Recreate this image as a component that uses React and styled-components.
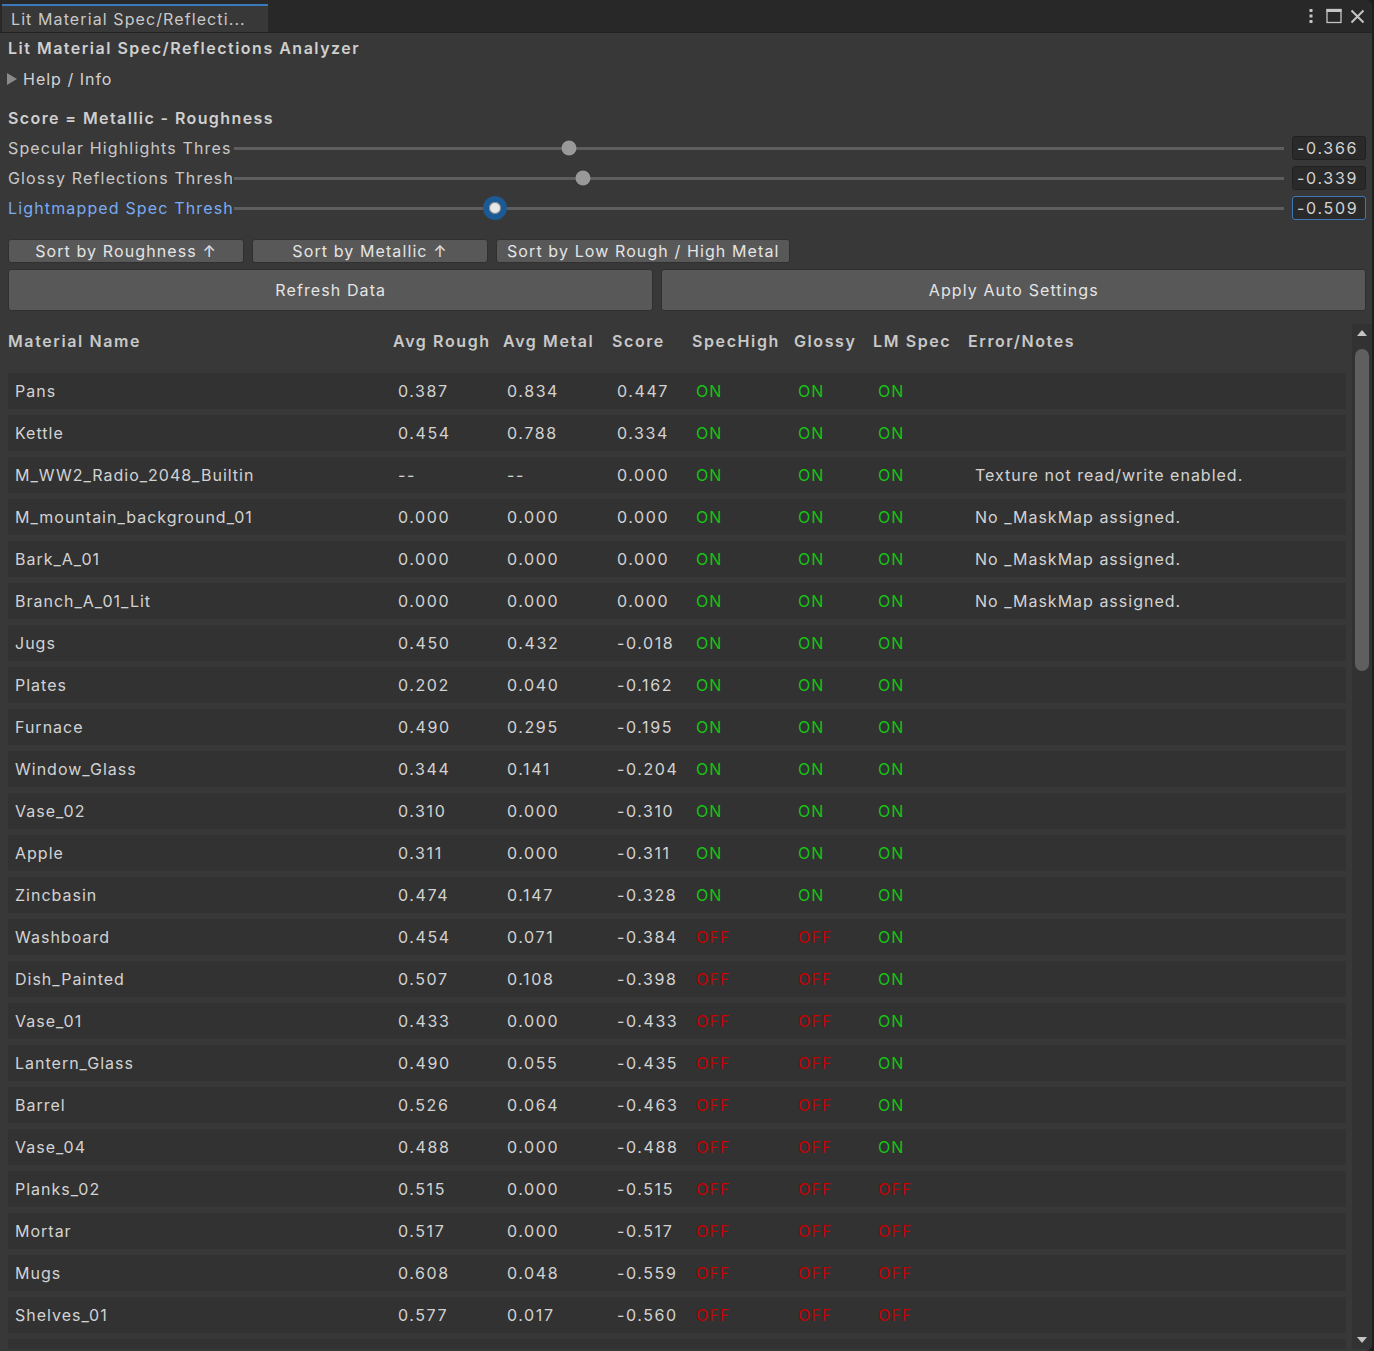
import React from "react";
import styled, { createGlobalStyle, css } from "styled-components";

const Global = createGlobalStyle`
  html, body {
    margin: 0;
    padding: 0;
    background: #1c1c1c;
  }
  * { box-sizing: border-box; }
`;

const Window = styled.div`
  width: 1374px;
  height: 1351px;
  display: flex;
  flex-direction: column;
  background: #383838;
  border-right: 2px solid #1e1e1e;
  border-radius: 0 8px 8px 0;
  overflow: hidden;
  font-family: Inter, "Noto Sans", sans-serif;
  font-size: 16px;
  letter-spacing: 1px;
  color: #d2d2d2;
`;

const TabBar = styled.div`
  height: 33px;
  flex-shrink: 0;
  display: flex;
  align-items: flex-end;
  background: #282828;
  border-bottom: 1px solid #232323;
  padding-left: 2px;
`;

const Tab = styled.div`
  width: 266px;
  height: 28px;
  background: #383838;
  border-top: 2px solid #3a79bb;
  padding-left: 9px;
  line-height: 26px;
  color: #c8c8c8;
  letter-spacing: 1.1px;
  white-space: nowrap;
  overflow: hidden;
`;

const TabTools = styled.div`
  margin-left: auto;
  height: 32px;
  display: flex;
  align-items: center;
  padding-right: 7px;
  color: #c4c4c4;
`;

const ToolIcon = styled.span`
  display: flex;
  margin-left: ${(p) => p.gap || 0}px;
`;

const Body = styled.div`
  flex: 1;
  min-height: 0;
  display: flex;
  flex-direction: column;
  padding: 0 6px 2px 8px;
`;

const Title = styled.div`
  flex-shrink: 0;
  height: 31px;
  line-height: 31px;
  font-weight: 600;
  letter-spacing: 1.5px;
  color: #cfcfcf;
`;

const Foldout = styled.div`
  flex-shrink: 0;
  height: 30px;
  display: flex;
  align-items: center;
  margin-left: -1px;
  gap: 6px;
  color: #d2d2d2;
`;

const Arrow = styled.span`
  width: 0;
  height: 0;
  border-top: 6px solid transparent;
  border-bottom: 6px solid transparent;
  border-left: 10px solid #8a8a8a;
`;

const SectionHead = styled.div`
  flex-shrink: 0;
  margin-top: 9px;
  height: 30px;
  line-height: 30px;
  font-weight: 600;
  letter-spacing: 1.4px;
  color: #cfcfcf;
`;

const SliderRow = styled.div`
  flex-shrink: 0;
  height: 30px;
  display: flex;
  align-items: center;
`;

const SliderLabel = styled.div`
  width: 224px;
  flex-shrink: 0;
  white-space: nowrap;
  overflow: hidden;
  letter-spacing: 1.15px;
  color: ${(p) => (p.focused ? "#7aaaf0" : "#c8c8c8")};
`;

const Track = styled.div`
  position: relative;
  flex: 1;
  margin-left: 2px;
  height: 3px;
  background: #5e5e5e;
`;

const Thumb = styled.div`
  position: absolute;
  top: 50%;
  width: 15px;
  height: 15px;
  border-radius: 50%;
  background: #999999;
  transform: translate(-50%, -50%);
  ${(p) =>
    p.focused &&
    css`
      width: 24px;
      height: 24px;
      background: #e8e8e8;
      border: 6px solid #1d5a94;
      box-shadow: inset 0 0 0 1px #8a8a8a;
    `}
`;

const ValueField = styled.div`
  width: 74px;
  height: 24px;
  flex-shrink: 0;
  margin-left: 8px;
  padding-left: 4px;
  line-height: 22px;
  letter-spacing: 1.7px;
  background: #2a2a2a;
  border: 1px solid ${(p) => (p.focused ? "#3c78b5" : "#212121")};
  border-radius: 3px;
  color: #d2d2d2;
`;

const SortBar = styled.div`
  flex-shrink: 0;
  margin-top: 16px;
  display: flex;
  gap: 8px;
`;

const Button = styled.button`
  font-family: inherit;
  font-size: 16px;
  letter-spacing: 1.1px;
  color: #e4e4e4;
  background: #585858;
  border: 1px solid #303030;
  border-radius: 3px;
  padding: 0 10px;
  height: ${(p) => (p.big ? "42px" : "24px")};
  width: ${(p) => (p.w ? `${p.w}px` : "auto")};
  flex: ${(p) => (p.big ? "1 1 auto" : "none")};
  white-space: nowrap;
  cursor: pointer;
`;

const ActionBar = styled.div`
  flex-shrink: 0;
  margin-top: 6px;
  display: flex;
  gap: 8px;
`;

const TableArea = styled.div`
  margin-top: 13px;
  margin-right: -6px;
  flex: 1;
  min-height: 0;
  display: flex;
  gap: 6px;
`;

const TableScroll = styled.div`
  flex: 1;
  overflow: hidden;
  display: flex;
  flex-direction: column;
`;

const HeaderRow = styled.div`
  flex-shrink: 0;
  height: 34px;
  display: grid;
  grid-template-columns: 385px 110px 109px 80px 102px 79px 95px 1fr;
  align-items: center;
  font-weight: 600;
  letter-spacing: 1.6px;
  color: #c8c8c8;
  white-space: nowrap;
`;

const Rows = styled.div`
  flex-shrink: 0;
  padding-top: 15px;
  display: flex;
  flex-direction: column;
  gap: 6px;
`;

const Row = styled.div`
  flex-shrink: 0;
  height: 36px;
  display: grid;
  grid-template-columns: 383px 109px 110px 79px 102px 80px 97px 1fr;
  align-items: center;
  padding-left: 7px;
  background: #323232;
  white-space: nowrap;
`;

const Num = styled.span`
  letter-spacing: 1.6px;
`;

const Flag = styled.span`
  color: ${(p) => (p.on ? "#14c414" : "#c40000")};
`;

const ScrollBar = styled.div`
  width: 20px;
  flex-shrink: 0;
  display: flex;
  flex-direction: column;
  align-items: center;
  background: #323232;
  padding: 6px 0 6px;
`;

const ScrollArrow = styled.span`
  width: 0;
  height: 0;
  border-left: 5px solid transparent;
  border-right: 5px solid transparent;
  ${(p) =>
    p.down
      ? css`border-top: 6px solid #c4c4c4; margin-top: auto;`
      : css`border-bottom: 6px solid #c4c4c4;`}
`;

const ScrollThumb = styled.div`
  margin-top: 13px;
  width: 14px;
  height: 322px;
  border-radius: 7px;
  background: #5f5f5f;
`;

const thresholds = [
  { label: "Specular Highlights Threshold", value: -0.366 },
  { label: "Glossy Reflections Threshold", value: -0.339 },
  { label: "Lightmapped Spec Threshold", value: -0.509, focused: true },
];

const materials = [
  ["Pans", "0.387", "0.834", 0.447],
  ["Kettle", "0.454", "0.788", 0.334],
  ["M_WW2_Radio_2048_Builtin", "--", "--", 0.0, "Texture not read/write enabled."],
  ["M_mountain_background_01", "0.000", "0.000", 0.0, "No _MaskMap assigned."],
  ["Bark_A_01", "0.000", "0.000", 0.0, "No _MaskMap assigned."],
  ["Branch_A_01_Lit", "0.000", "0.000", 0.0, "No _MaskMap assigned."],
  ["Jugs", "0.450", "0.432", -0.018],
  ["Plates", "0.202", "0.040", -0.162],
  ["Furnace", "0.490", "0.295", -0.195],
  ["Window_Glass", "0.344", "0.141", -0.204],
  ["Vase_02", "0.310", "0.000", -0.31],
  ["Apple", "0.311", "0.000", -0.311],
  ["Zincbasin", "0.474", "0.147", -0.328],
  ["Washboard", "0.454", "0.071", -0.384],
  ["Dish_Painted", "0.507", "0.108", -0.398],
  ["Vase_01", "0.433", "0.000", -0.433],
  ["Lantern_Glass", "0.490", "0.055", -0.435],
  ["Barrel", "0.526", "0.064", -0.463],
  ["Vase_04", "0.488", "0.000", -0.488],
  ["Planks_02", "0.515", "0.000", -0.515],
  ["Mortar", "0.517", "0.000", -0.517],
  ["Mugs", "0.608", "0.048", -0.559],
  ["Shelves_01", "0.577", "0.017", -0.56],
];

const KebabIcon = () => (
  <svg width="6" height="16" viewBox="0 0 6 16">
    <rect x="1.5" y="1" width="3" height="3" fill="currentColor" />
    <rect x="1.5" y="6.5" width="3" height="3" fill="currentColor" />
    <rect x="1.5" y="12" width="3" height="3" fill="currentColor" />
  </svg>
);

const MaximizeIcon = () => (
  <svg width="16" height="16" viewBox="0 0 16 16">
    <rect x="1" y="1.5" width="14" height="13" fill="none" stroke="currentColor" strokeWidth="1.3" />
    <rect x="0.5" y="1" width="15" height="3" fill="currentColor" />
  </svg>
);

const CloseIcon = () => (
  <svg width="15" height="15" viewBox="0 0 15 15">
    <path d="M1.5 1.5 L13.5 13.5 M13.5 1.5 L1.5 13.5" stroke="currentColor" strokeWidth="2" />
  </svg>
);

const thumbLeft = (v) => `calc(7px + ${((v + 1) / 2).toFixed(4)} * (100% - 14px))`;

export default function App() {
  const [spec, gloss, lm] = thresholds.map((t) => t.value);
  return (
    <>
      <Global />
      <Window>
        <TabBar>
          <Tab>Lit Material Spec/Reflecti...</Tab>
          <TabTools>
            <ToolIcon>
              <KebabIcon />
            </ToolIcon>
            <ToolIcon gap={12}>
              <MaximizeIcon />
            </ToolIcon>
            <ToolIcon gap={8}>
              <CloseIcon />
            </ToolIcon>
          </TabTools>
        </TabBar>
        <Body>
          <Title>Lit Material Spec/Reflections Analyzer</Title>
          <Foldout>
            <Arrow />
            Help / Info
          </Foldout>
          <SectionHead>Score = Metallic - Roughness</SectionHead>
          {thresholds.map((t) => (
            <SliderRow key={t.label}>
              <SliderLabel focused={t.focused}>{t.label}</SliderLabel>
              <Track>
                <Thumb focused={t.focused} style={{ left: thumbLeft(t.value) }} />
              </Track>
              <ValueField focused={t.focused}>{t.value.toFixed(3)}</ValueField>
            </SliderRow>
          ))}
          <SortBar>
            <Button w={236}>Sort by Roughness ↑</Button>
            <Button w={236}>Sort by Metallic ↑</Button>
            <Button>Sort by Low Rough / High Metal</Button>
          </SortBar>
          <ActionBar>
            <Button big>Refresh Data</Button>
            <Button big>Apply Auto Settings</Button>
          </ActionBar>
          <TableArea>
            <TableScroll>
              <HeaderRow>
                <span>Material Name</span>
                <span>Avg Rough</span>
                <span>Avg Metal</span>
                <span>Score</span>
                <span>SpecHigh</span>
                <span>Glossy</span>
                <span>LM Spec</span>
                <span>Error/Notes</span>
              </HeaderRow>
              <Rows>
                {materials.map(([name, rough, metal, score, note]) => (
                  <Row key={name}>
                    <span>{name}</span>
                    <Num>{rough}</Num>
                    <Num>{metal}</Num>
                    <Num>{score.toFixed(3)}</Num>
                    <Flag on={score >= spec}>{score >= spec ? "ON" : "OFF"}</Flag>
                    <Flag on={score >= gloss}>{score >= gloss ? "ON" : "OFF"}</Flag>
                    <Flag on={score >= lm}>{score >= lm ? "ON" : "OFF"}</Flag>
                    <span>{note}</span>
                  </Row>
                ))}
                <Row />
              </Rows>
            </TableScroll>
            <ScrollBar>
              <ScrollArrow />
              <ScrollThumb />
              <ScrollArrow down />
            </ScrollBar>
          </TableArea>
        </Body>
      </Window>
    </>
  );
}
